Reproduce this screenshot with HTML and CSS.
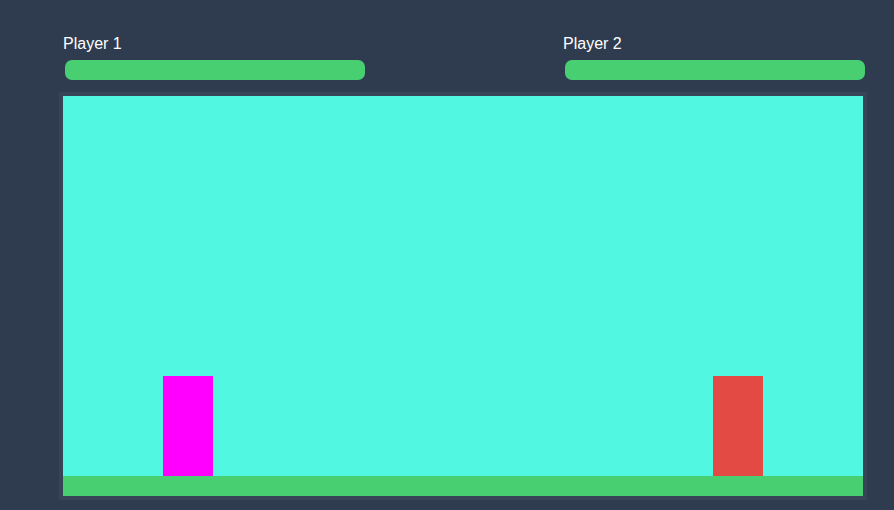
FILE: index.html
```html
<!DOCTYPE html>
<html>
<head>
<meta charset="utf-8">
<link rel="stylesheet" href="styles.css">
</head>
<body>
<div class="app">
  <div class="hud">
    <div class="player-hud">
      <div class="name">Player 1</div>
      <div class="bar"></div>
    </div>
    <div class="player-hud">
      <div class="name">Player 2</div>
      <div class="bar"></div>
    </div>
  </div>
  <div class="arena">
    <div class="sky"></div>
    <div class="ground"></div>
    <div class="fighter fighter-1"></div>
    <div class="fighter fighter-2"></div>
  </div>
</div>
</body>
</html>
```
FILE: styles.css
```css
html, body {
  margin: 0;
  padding: 0;
  background: #2f3c50;
  width: 894px;
  height: 510px;
  overflow: hidden;
  font-family: "Liberation Sans", Arial, sans-serif;
}
.app {
  padding: 35px 0 0 59px;
}
.hud {
  display: flex;
  gap: 198px;
  padding-left: 4px;
  margin-bottom: 12px;
}
.player-hud {
  width: 302px;
  flex-shrink: 0;
  display: flex;
  flex-direction: column;
}
.name {
  color: #ffffff;
  font-size: 16px;
  line-height: 18px;
  height: 18px;
  margin-bottom: 7px;
}
.bar {
  width: 300px;
  height: 20px;
  margin-left: 2px;
  border-radius: 7px;
  background: #48cf72;
}
.arena {
  position: relative;
  width: 800px;
  height: 400px;
  border: 4px solid #374358;
  display: flex;
  flex-direction: column;
}
.sky {
  flex: 1;
  background: #52f7e2;
}
.ground {
  height: 20px;
  background: #48cf72;
}
.fighter {
  position: absolute;
  bottom: 20px;
  width: 50px;
  height: 100px;
}
.fighter-1 {
  left: 100px;
  background: #ff00ff;
}
.fighter-2 {
  left: 650px;
  background: #e24a43;
}
```
